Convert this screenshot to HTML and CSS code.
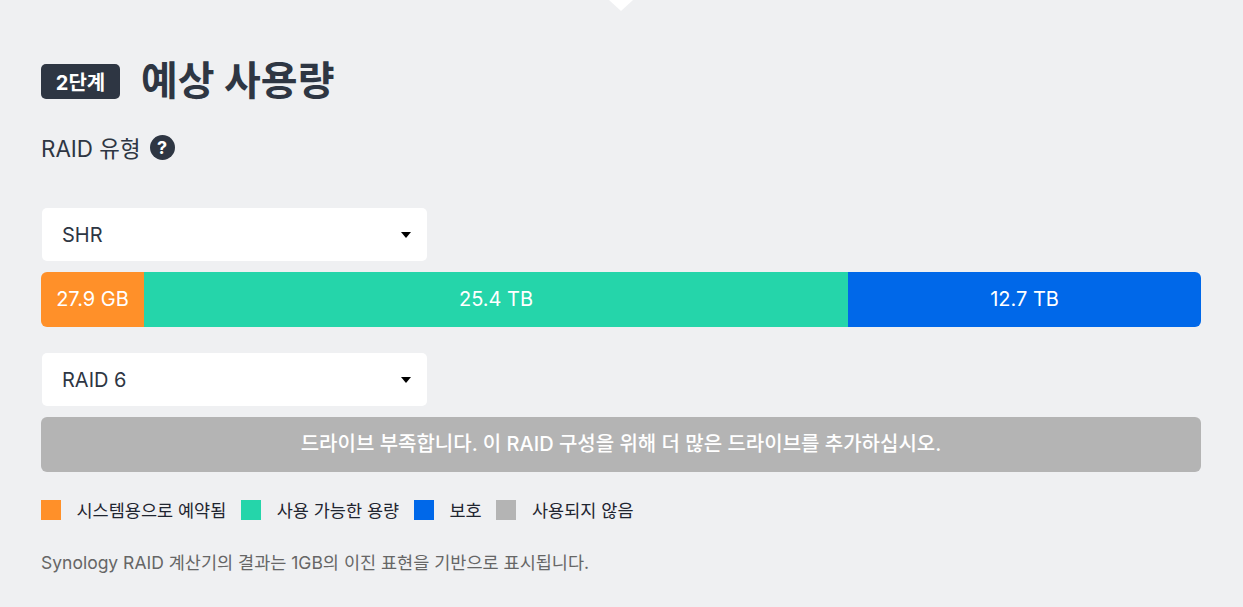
FILE: index.html
```html
<!DOCTYPE html>
<html lang="ko">
<head>
    <meta charset="UTF-8">
    <meta name="viewport" content="width=device-width, initial-scale=1.0">
    <title>RAID 계산기</title>
    <link rel="stylesheet" href="styles.css">
</head>
<body>
    <div class="notch"></div>
    <section class="usage">
        <div class="step-heading">
            <span class="step-badge">2단계</span>
            <h2 class="step-title">예상 사용량</h2>
        </div>
        <div class="raid-label">
            <span>RAID 유형</span>
            <span class="help-icon">?</span>
        </div>

        <div class="select-box">
            <span>SHR</span>
            <span class="select-arrow"></span>
        </div>
        <div class="bar">
            <div class="seg seg-reserved">27.9 GB</div>
            <div class="seg seg-available">25.4 TB</div>
            <div class="seg seg-protect">12.7 TB</div>
        </div>

        <div class="select-box select-second">
            <span>RAID 6</span>
            <span class="select-arrow"></span>
        </div>
        <div class="bar bar-unused">드라이브 부족합니다. 이 RAID 구성을 위해 더 많은 드라이브를 추가하십시오.</div>

        <div class="legend">
            <div class="legend-item"><span class="swatch swatch-reserved"></span>시스템용으로 예약됨</div>
            <div class="legend-item"><span class="swatch swatch-available"></span>사용 가능한 용량</div>
            <div class="legend-item"><span class="swatch swatch-protect"></span>보호</div>
            <div class="legend-item"><span class="swatch swatch-unused"></span>사용되지 않음</div>
        </div>
        <p class="note">Synology RAID 계산기의 결과는 1GB의 이진 표현을 기반으로 표시됩니다.</p>
    </section>
</body>
</html>
```

FILE: styles.css
```css
html, body {
    margin: 0;
    padding: 0;
    height: 100%;
}

body {
    background: #eff0f2;
    color: #2e3643;
    font-family: Inter, 'Noto Sans CJK KR', sans-serif;
    overflow: hidden;
    position: relative;
}

.notch {
    position: absolute;
    top: 0;
    left: 609px;
    width: 0;
    height: 0;
    border-left: 12px solid transparent;
    border-right: 12px solid transparent;
    border-top: 11px solid #fff;
}

.usage {
    padding: 58px 42px 0 41px;
}

.step-heading {
    display: flex;
    align-items: center;
    gap: 21px;
    height: 46px;
}

.step-badge {
    width: 79px;
    height: 35px;
    background: #2e3643;
    color: #fff;
    border-radius: 5px;
    font-size: 20px;
    font-weight: 700;
    display: flex;
    align-items: center;
    justify-content: center;
}

.step-title {
    margin: 0;
    font-size: 40px;
    font-weight: 700;
    line-height: 46px;
}

.raid-label {
    display: flex;
    align-items: center;
    gap: 9px;
    margin-top: 30px;
    height: 26px;
    font-size: 22.4px;
}

.help-icon {
    width: 25px;
    height: 25px;
    border-radius: 50%;
    background: #2e3643;
    color: #fff;
    font-size: 18px;
    font-weight: 700;
    display: flex;
    align-items: center;
    justify-content: center;
}

.select-box {
    width: 385px;
    height: 53px;
    margin: 48px 0 0 1px;
    padding: 0 20px;
    box-sizing: border-box;
    background: #fff;
    border-radius: 5px;
    font-size: 20px;
    display: flex;
    align-items: center;
    justify-content: space-between;
}

.select-second {
    margin-top: 26px;
}

.select-arrow {
    width: 0;
    height: 0;
    margin-right: -4px;
    border-left: 5px solid transparent;
    border-right: 5px solid transparent;
    border-top: 6px solid #000;
}

.bar {
    display: flex;
    height: 55px;
    margin-top: 11px;
    border-radius: 6px;
    overflow: hidden;
    color: #fff;
    font-size: 20px;
    line-height: 55px;
    text-align: center;
}

.seg-reserved {
    width: 103px;
    background: #ff9029;
}

.seg-available {
    width: 704px;
    background: #25d5aa;
}

.seg-protect {
    flex: 1;
    background: #0068e9;
}

.bar-unused {
    display: block;
    background: #b4b4b4;
    font-weight: 500;
}

.legend {
    display: flex;
    align-items: center;
    margin-top: 25px;
    font-size: 17.5px;
    color: #1f2530;
}

.legend-item {
    display: flex;
    align-items: center;
    gap: 15.5px;
    margin-right: 14.8px;
}

.swatch {
    width: 20px;
    height: 20px;
}

.swatch-reserved { background: #ff9029; }
.swatch-available { background: #25d5aa; }
.swatch-protect { background: #0068e9; }
.swatch-unused { background: #b4b4b4; }

.note {
    margin: 29px 0 0;
    font-size: 17.5px;
    line-height: 24px;
    color: #666;
}
```
